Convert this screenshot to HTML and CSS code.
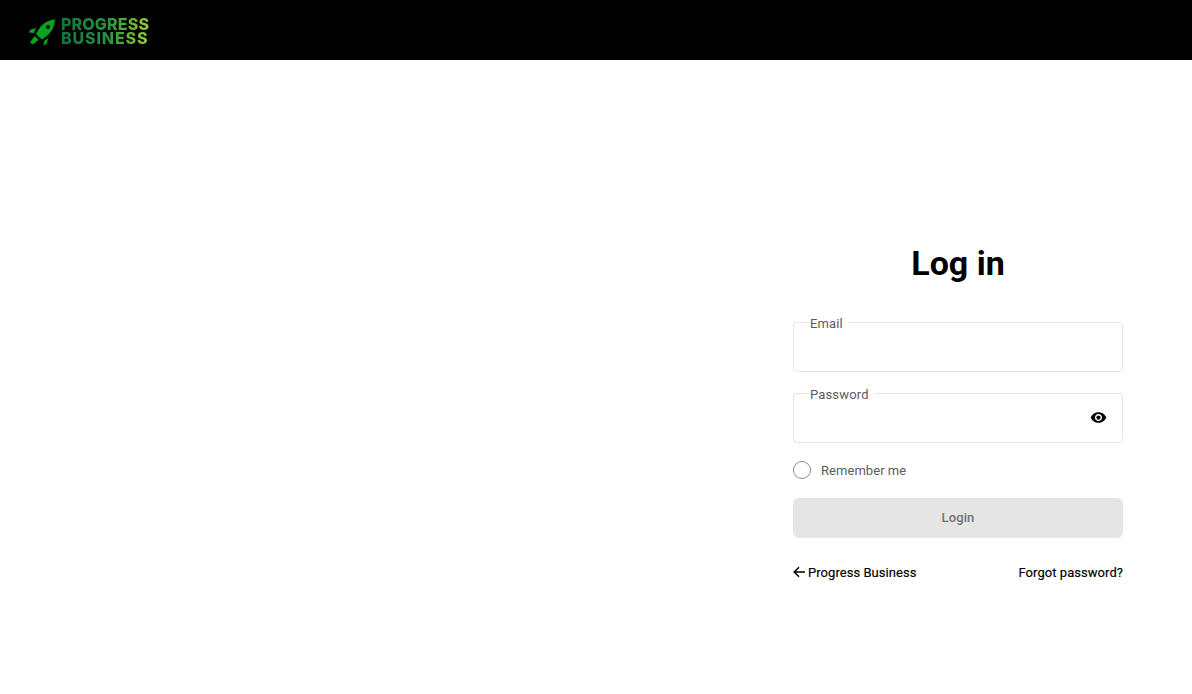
FILE: index.html
```html
<!DOCTYPE html>
<html lang="en">
<head>
<meta charset="utf-8">
<title>Log in</title>
<link rel="stylesheet" href="styles.css">
</head>
<body>
<header class="topbar">
  <div class="logo">
    <svg class="rocket" width="28" height="28" viewBox="0 0 28 28">
      <path fill="#0aa51e" d="M27 1.500C20 2 14.500 5.500 11 11L8 16L14 21.500L18 18.500C23.500 14.500 26.500 8.500 27 1.500Z"/>
      <circle cx="20" cy="9" r="2" fill="#000"/>
      <path fill="#0aa51e" d="M8 10L2.500 11.500L1 14.500L6 15ZM16.500 22.500L20 20.500L19 25L15.500 28ZM6.500 18L10.500 22L5 26.500L2 24.500Z"/>
    </svg>
    <div class="wordmark"><span class="word-a">PROGRESS</span><span class="word-b">BUSINESS</span></div>
  </div>
</header>
<main class="page">
  <section class="panel">
    <h1 class="title">Log in</h1>
    <form class="form">
      <fieldset class="field">
        <legend class="field-label">Email</legend>
        <input class="field-input" type="email" aria-label="Email">
      </fieldset>
      <fieldset class="field field-password">
        <legend class="field-label">Password</legend>
        <input class="field-input" type="password" aria-label="Password">
        <svg class="eye" width="17" height="17" viewBox="0 0 24 24"><path fill="#000" d="M12 4.500C7 4.500 2.730 7.610 1 12c1.730 4.390 6 7.500 11 7.500s9.270-3.110 11-7.500c-1.730-4.390-6-7.500-11-7.500zM12 17c-2.760 0-5-2.240-5-5s2.240-5 5-5 5 2.240 5 5-2.240 5-5 5zm0-8c-1.660 0-3 1.340-3 3s1.340 3 3 3 3-1.340 3-3-1.340-3-3-3z"/></svg>
      </fieldset>
      <label class="remember"><span class="radio"></span><span class="remember-text">Remember me</span></label>
      <button class="login" type="button" disabled>Login</button>
      <nav class="links">
        <a class="link back" href="#"><svg width="12" height="12" viewBox="0 0 12 12"><path fill="none" stroke="#000" stroke-width="1.500" d="M12 6H1.500M6 1.200L1.200 6L6 10.800"/></svg>Progress Business</a>
        <a class="link" href="#">Forgot password?</a>
      </nav>
    </form>
  </section>
</main>
</body>
</html>
```
FILE: styles.css
```css
* { box-sizing: border-box; }
html, body { margin: 0; height: 100%; }
body { background: #fff; font-family: Roboto, "Liberation Sans", sans-serif; overflow: hidden; }
.topbar { height: 60px; background: #000; display: flex; align-items: center; padding-left: 28px; }
.logo { display: flex; align-items: center; gap: 5px; }
.rocket { display: block; margin-top: 3px; }
.wordmark { display: flex; flex-direction: column; margin-top: 2px; font-family: Inter, sans-serif; font-weight: 800; font-size: 16px; line-height: 14px; background: linear-gradient(90deg, #0f7344 0%, #2a9440 55%, #9acd32 100%); -webkit-background-clip: text; background-clip: text; color: transparent; }
.word-a { letter-spacing: 0.15px; }
.word-b { letter-spacing: 0.85px; }
.page { display: flex; justify-content: flex-end; padding: 183px 69px 0 0; }
.panel { width: 330px; }
.title { margin: 0 0 31px; font-size: 34px; line-height: 40px; font-weight: 700; text-align: center; color: #000; }
.form { display: flex; flex-direction: column; }
.field { margin: 0 0 13px; padding: 0 16px; height: 58px; border: 1px solid #e5e5e5; border-radius: 4px; display: flex; align-items: center; position: relative; }
.field-label { padding: 2px 6px 0 0; font-size: 13px; line-height: 15px; color: #5c5c5c; letter-spacing: 0.15px; }
.field-input { flex: 1; border: 0; outline: 0; background: transparent; min-width: 0; font: inherit; }
.eye { position: absolute; right: 15px; top: 7px; }
.remember { display: flex; align-items: center; gap: 10px; height: 18px; margin: 5px 0 19px; }
.radio { width: 18px; height: 18px; border: 1px solid #8a8a8a; border-radius: 50%; }
.remember-text { font-size: 13px; color: #5c5c5c; letter-spacing: 0.05px; }
.login { height: 40px; border: 0; border-radius: 6px; background: #e5e5e5; color: #737373; font: 500 13px Roboto, sans-serif; letter-spacing: 0.1px; padding: 0 0 2px; }
.links { display: flex; justify-content: space-between; align-items: center; margin-top: 26px; height: 16px; }
.link { font-size: 13px; font-weight: 400; color: #000; text-decoration: none; letter-spacing: 0.05px; -webkit-text-stroke: 0.15px #000; }
.back { display: flex; align-items: center; gap: 3px; }
```
